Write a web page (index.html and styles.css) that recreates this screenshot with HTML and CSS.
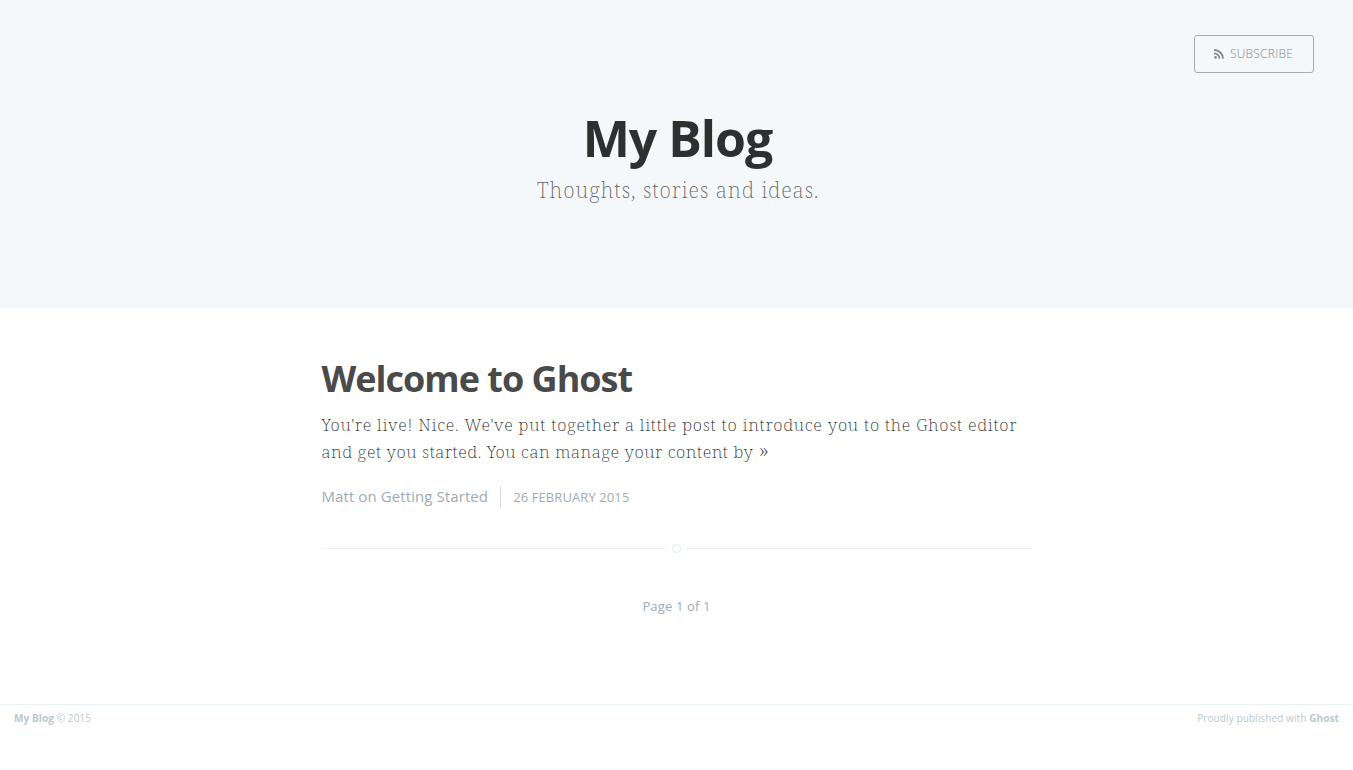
FILE: index.html
```html
<!DOCTYPE html>
<html lang="en">
<head>
  <meta charset="UTF-8">
  <title>My Blog</title>
  <link rel="stylesheet" href="styles.css">
</head>
<body>
  <header class="main-header">
    <nav class="main-nav">
      <a class="subscribe-button" href="#">
        <svg class="icon-feed" viewBox="0 0 10 10" width="10" height="10">
          <circle cx="1.5" cy="8.4" r="1.4" fill="currentColor"/>
          <path d="M0 4.3a5.5 5.5 0 0 1 5.5 5.5M0 1a8.8 8.8 0 0 1 9 8.8" fill="none" stroke="currentColor" stroke-width="1.8"/>
        </svg>
        <span>Subscribe</span>
      </a>
    </nav>
    <div class="main-header-content">
      <h1 class="page-title">My Blog</h1>
      <h2 class="page-description">Thoughts, stories and ideas.</h2>
    </div>
  </header>

  <main class="content">
    <article class="post">
      <h2 class="post-title"><a href="#">Welcome to Ghost</a></h2>
      <p class="post-excerpt">
        <span class="line line-one">You're live! Nice. We've put together a little post to introduce you to the Ghost editor</span>
        <span class="line line-two">and get you started. You can manage your content by <a class="read-more" href="#">»</a></span>
      </p>
      <footer class="post-meta">
        <span class="author">Matt on Getting Started</span>
        <time class="post-date" datetime="2015-02-26">26 February 2015</time>
      </footer>
      <div class="divider"><i></i></div>
    </article>
    <nav class="pagination">Page 1 of 1</nav>
  </main>

  <footer class="site-footer">
    <section class="copyright"><a href="#">My Blog</a> © 2015</section>
    <section class="poweredby">Proudly published with <a href="#">Ghost</a></section>
  </footer>
</body>
</html>
```
FILE: styles.css
```css
* { box-sizing: border-box; }
body {
  margin: 0;
  background: #fff;
  font-family: "Open Sans", sans-serif;
  color: #3a4145;
}
a { color: inherit; text-decoration: none; }
h1, h2, p { margin: 0; }

.main-header {
  height: 308px;
  background: #f4f8fb;
  text-align: center;
}
.main-nav {
  display: flex;
  justify-content: flex-end;
  padding: 35px 39px 0 0;
}
.subscribe-button {
  display: flex;
  align-items: center;
  justify-content: center;
  gap: 6px;
  width: 120px;
  height: 38px;
  padding: 0 1px 1px 0;
  border: 1px solid #a5abb0;
  border-radius: 3px;
  color: #85888b;
  font-size: 12px;
  font-weight: 300;
  letter-spacing: 0.25px;
  text-transform: uppercase;
}
.icon-feed {
  margin-top: 1px;
  color: #8a8a8a;
}
.main-header-content { padding-top: 32px; }
.page-title {
  padding-left: 2px;
  font-size: 50px;
  line-height: 66px;
  font-weight: 700;
  letter-spacing: -1px;
  color: #2e3030;
}
.page-description {
  padding-left: 3px;
  font-family: "Noto Serif", "Liberation Serif", serif;
  font-size: 21px;
  line-height: 39px;
  font-weight: 200;
  letter-spacing: 0.9px;
  color: #666;
}

.content {
  width: 710px;
  margin: 0 auto;
  padding-top: 46px;
}
.post-title {
  font-size: 36px;
  line-height: 50px;
  font-weight: 700;
  letter-spacing: -1px;
  color: #4a4a4a;
}
.post-excerpt {
  margin-top: 7px;
  font-family: "Noto Serif", "Liberation Serif", serif;
  font-size: 17px;
  font-weight: 200;
  line-height: 27px;
  color: #25292c;
}
.line { display: block; height: 27px; white-space: nowrap; }
.line-one { letter-spacing: 0.75px; }
.line-two { letter-spacing: 0.56px; }
.read-more { font-size: 22px; line-height: 1; }
.post-meta {
  display: flex;
  align-items: center;
  height: 22px;
  margin-top: 21px;
  color: #9eabb3;
  font-size: 15px;
}
.author {
  padding-bottom: 2px;
  letter-spacing: 0.09px;
}
.post-date {
  margin-left: 12px;
  padding-left: 12px;
  border-left: 1px solid #d5dbde;
  font-size: 13px;
  line-height: 22px;
  letter-spacing: 0.1px;
  text-transform: uppercase;
}
.divider {
  display: flex;
  align-items: center;
  height: 9px;
  margin-top: 36px;
}
.divider::before, .divider::after {
  content: "";
  flex: 1;
  height: 1px;
  background: #ebf2f6;
}
.divider i {
  width: 9px;
  height: 9px;
  margin: 0 5px;
  border: 1px solid #e0e9ee;
  border-radius: 50%;
}
.pagination {
  margin-top: 43px;
  font-size: 13px;
  line-height: 20px;
  letter-spacing: 0.15px;
  text-align: center;
  color: #9eabb3;
}
.site-footer {
  display: flex;
  justify-content: space-between;
  margin-top: 88px;
  padding: 5px 14px;
  border-top: 1px solid #ebf2f6;
  font-size: 10px;
  line-height: 16px;
  letter-spacing: 0.1px;
  color: #bbc7cc;
}
.site-footer a { font-weight: 700; }
```
